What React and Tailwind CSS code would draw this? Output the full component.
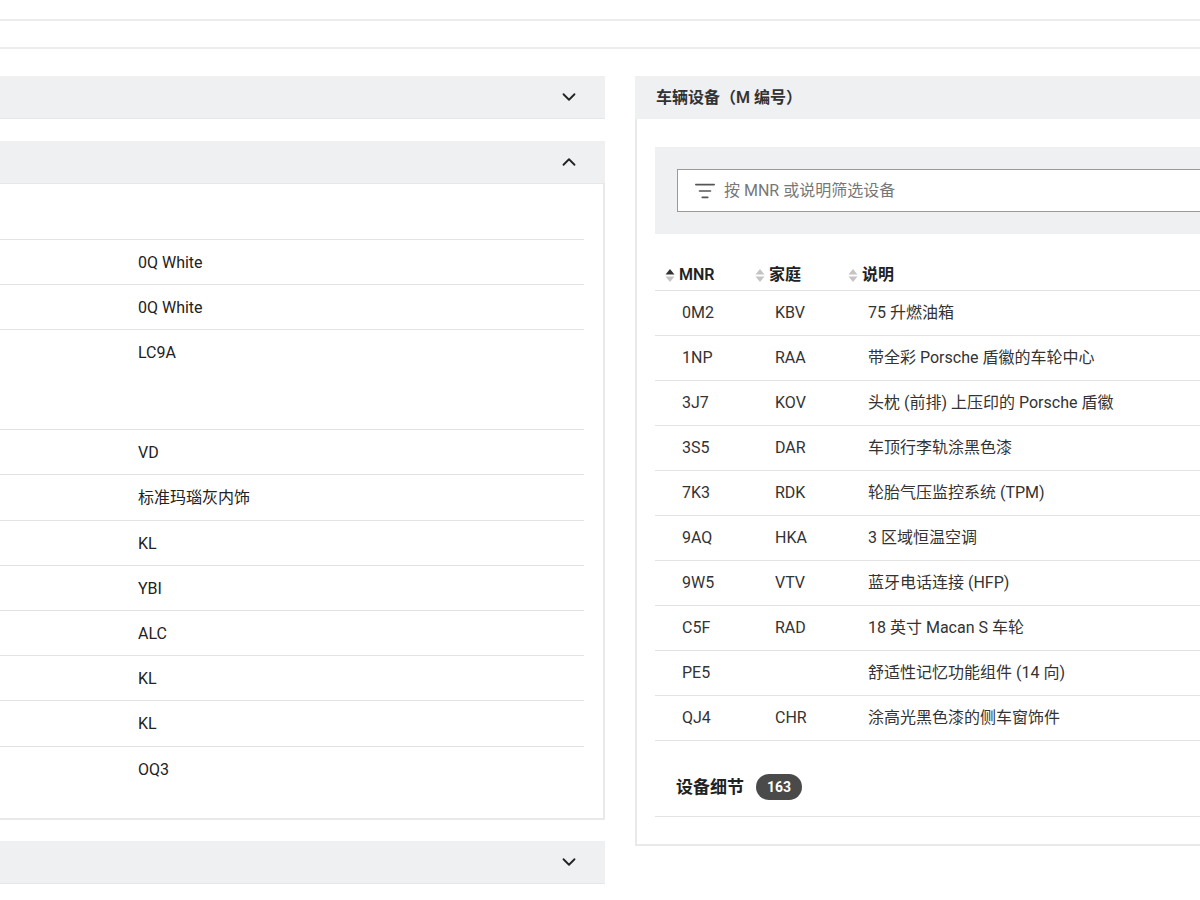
import { ChevronDown, ChevronUp, ListFilter } from "lucide-react";

const specs = [
  { value: "0Q White", h: "h-[45px]" },
  { value: "0Q White", h: "h-[45px]" },
  { value: "LC9A", h: "h-[100px]" },
  { value: "VD", h: "h-[45px]" },
  { value: "标准玛瑙灰内饰", h: "h-[46px]" },
  { value: "KL", h: "h-[45px]" },
  { value: "YBI", h: "h-[45px]" },
  { value: "ALC", h: "h-[45px]" },
  { value: "KL", h: "h-[45px]" },
  { value: "KL", h: "h-[46px]" },
];

const equipment = [
  { mnr: "0M2", family: "KBV", desc: "75 升燃油箱" },
  { mnr: "1NP", family: "RAA", desc: "带全彩 Porsche 盾徽的车轮中心" },
  { mnr: "3J7", family: "KOV", desc: "头枕 (前排) 上压印的 Porsche 盾徽" },
  { mnr: "3S5", family: "DAR", desc: "车顶行李轨涂黑色漆" },
  { mnr: "7K3", family: "RDK", desc: "轮胎气压监控系统 (TPM)" },
  { mnr: "9AQ", family: "HKA", desc: "3 区域恒温空调" },
  { mnr: "9W5", family: "VTV", desc: "蓝牙电话连接 (HFP)" },
  { mnr: "C5F", family: "RAD", desc: "18 英寸 Macan S 车轮" },
  { mnr: "PE5", family: "", desc: "舒适性记忆功能组件 (14 向)" },
  { mnr: "QJ4", family: "CHR", desc: "涂高光黑色漆的侧车窗饰件" },
];

const SortIcon = ({ active }) => (
  <svg width="10" height="15" viewBox="0 0 10 15" className="mr-[4px]">
    <path d="M5 1 L9.5 6.5 L0.5 6.5 Z" fill={active ? "#333" : "#c4c4c4"} />
    <path d="M5 14 L9.5 8.5 L0.5 8.5 Z" fill="#c4c4c4" />
  </svg>
);

const AccordionHeader = ({ open }) => (
  <div className="h-[43px] bg-[#eff0f1] flex items-center justify-end pr-[25px] border-b border-[#e6e7e8]">
    {open ? (
      <ChevronUp size={22} strokeWidth={2} className="text-[#222]" />
    ) : (
      <ChevronDown size={22} strokeWidth={2} className="text-[#222]" />
    )}
  </div>
);

const App = () => {
  return (
    <div
      className="w-full h-[900px] overflow-hidden bg-white text-[16px] text-[#222]"
      style={{ fontFamily: '"Roboto", "Noto Sans CJK SC", sans-serif' }}
    >
      <div className="h-[21px] border-b-2 border-[#ececec]" />
      <div className="h-[28px] border-b-2 border-[#ececec]" />

      <div className="flex gap-[30px] pt-[27px] w-[1260px]">
        {/* left column */}
        <div className="w-[605px] flex flex-col">
          <AccordionHeader open={false} />
          <div className="h-[22px]" />
          <AccordionHeader open={true} />
          <div className="border-r-2 border-b-2 border-[#e9e9ea] pr-[19px]">
            <div className="h-[56px] border-b border-[#e3e3e3]" />
            {specs.map((s, i) => (
              <div key={i} className={`${s.h} border-b border-[#e3e3e3] pl-[138px] pt-[11px]`}>
                {s.value}
              </div>
            ))}
            <div className="h-[71px] pl-[138px] pt-[11px]">OQ3</div>
          </div>
          <div className="h-[21px]" />
          <AccordionHeader open={false} />
        </div>

        {/* right column */}
        <div className="w-[620px] flex flex-col self-start">
          <div className="h-[43px] bg-[#eff0f1] flex items-center pl-[21px] font-semibold text-[#333]">
            车辆设备（M 编号）
          </div>
          <div className="border-l-2 border-b-2 border-[#e9e9ea] pl-[18px] pt-[28px] pb-[27px]">
            <div className="bg-[#eff0f1] h-[87px] flex items-center pl-[22px]">
              <div className="flex-1 h-[43px] bg-white border border-[#9a9a9a] flex items-center pl-[16px] text-[#777]">
                <ListFilter size={22} strokeWidth={1.8} className="text-[#555] mr-[8px]" />
                按 MNR 或说明筛选设备
              </div>
            </div>

            <div className="mt-[20px]">
              <div className="flex items-center h-[37px] pt-[6px] border-b border-[#e3e3e3] font-semibold text-[#222]">
                <div className="w-[100px] flex items-center pl-[10px]">
                  <SortIcon active={true} />
                  MNR
                </div>
                <div className="w-[93px] flex items-center">
                  <SortIcon active={false} />
                  家庭
                </div>
                <div className="flex items-center">
                  <SortIcon active={false} />
                  说明
                </div>
              </div>
              {equipment.map((e) => (
                <div key={e.mnr} className="flex items-center h-[45px] border-b border-[#e3e3e3] text-[#333]">
                  <div className="w-[120px] pl-[27px]">{e.mnr}</div>
                  <div className="w-[93px]">{e.family}</div>
                  <div>{e.desc}</div>
                </div>
              ))}
              <div className="h-[76px] flex items-start pt-[33px] pl-[21px] border-b border-[#e3e3e3]">
                <span className="font-bold text-[17px] text-[#222] leading-[26px]">设备细节</span>
                <span className="ml-[12px] bg-[#4a4a4a] text-white text-[14px] font-bold rounded-full px-[11px] h-[26px] leading-[26px]">
                  163
                </span>
              </div>
            </div>
          </div>
        </div>
      </div>
    </div>
  );
};

export default App;
